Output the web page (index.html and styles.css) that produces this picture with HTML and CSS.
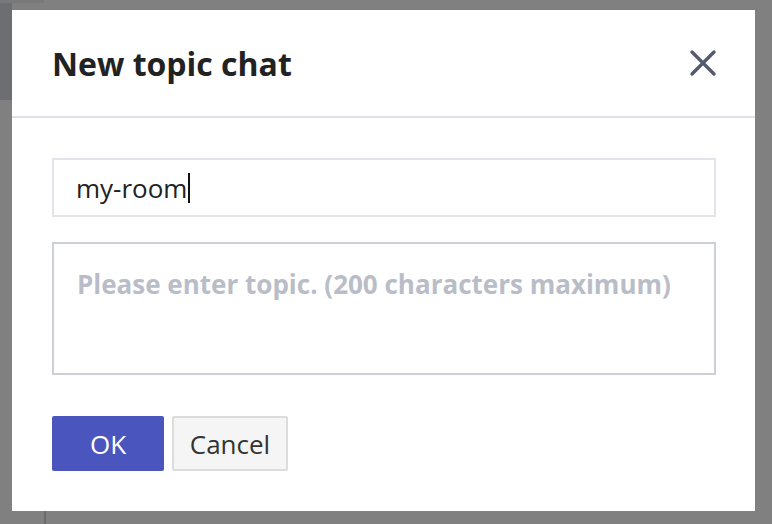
FILE: index.html
```html
<!DOCTYPE html>
<html lang="en">
<head>
<meta charset="utf-8">
<title>New topic chat</title>
<link rel="stylesheet" href="styles.css">
</head>
<body>
<div class="backdrop">
  <div class="bd-top"></div>
  <div class="bd-side"></div>
  <div class="bd-line"></div>
</div>
<div class="modal" role="dialog" aria-labelledby="dlg-title">
  <div class="modal-header">
    <h1 id="dlg-title" class="modal-title">New topic chat</h1>
    <button class="close-btn" aria-label="Close">
      <svg width="28" height="28" viewBox="0 0 28 28"><path d="M3 3 L25 25 M25 3 L3 25" stroke="#545b6b" stroke-width="3.4" stroke-linecap="round" fill="none"/></svg>
    </button>
  </div>
  <div class="modal-body">
    <div class="field field-name"><span class="field-value">my-room</span><span class="caret"></span></div>
    <div class="field field-topic"><span class="placeholder">Please enter topic. (200 characters maximum)</span></div>
    <div class="actions">
      <button class="btn btn-primary">OK</button>
      <button class="btn btn-default">Cancel</button>
    </div>
  </div>
</div>
</body>
</html>
```
FILE: styles.css
```css
html, body {
  margin: 0;
  padding: 0;
  width: 772px;
  height: 524px;
  overflow: hidden;
}
body {
  background: #808080;
  font-family: "Open Sans", "Noto Sans", sans-serif;
  position: relative;
}
.backdrop {
  position: absolute;
  inset: 0;
}
.bd-top {
  position: absolute;
  left: 0;
  top: 0;
  width: 44px;
  height: 3px;
  background: #78797b;
}
.bd-side {
  position: absolute;
  left: 0;
  top: 3px;
  width: 12px;
  height: 97px;
  background: #6d6e72;
}
.bd-line {
  position: absolute;
  left: 44px;
  top: 511px;
  width: 2px;
  height: 13px;
  background: #6b6b6b;
}
.modal {
  position: absolute;
  left: 12px;
  top: 10px;
  width: 743px;
  height: 501px;
  background: #fff;
  display: flex;
  flex-direction: column;
}
.modal-header {
  height: 106px;
  border-bottom: 2px solid #e0e0e8;
  display: flex;
  align-items: center;
  justify-content: space-between;
  padding: 0 38px 0 40px;
}
.modal-title {
  margin: 0;
  font-size: 32px;
  font-weight: 700;
  color: #222;
  letter-spacing: 0;
}
.close-btn {
  border: 0;
  background: none;
  padding: 0;
  width: 28px;
  height: 28px;
  display: flex;
}
.modal-body {
  padding: 40px 39px 40px 40px;
  display: flex;
  flex-direction: column;
}
.field {
  box-sizing: border-box;
  border: 2px solid #e2e4e9;
  display: flex;
  align-items: center;
}
.field-name {
  height: 59px;
  padding-left: 22px;
  font-size: 26px;
  color: #222;
}
.caret {
  width: 2px;
  height: 30px;
  background: #111;
  margin-left: 1px;
}
.field-topic {
  margin-top: 25px;
  height: 133px;
  border-color: #cdd0d6;
  align-items: flex-start;
  padding: 24px 23px 20px;
}
.placeholder {
  font-size: 26px;
  font-weight: 700;
  color: #b9bdc7;
  line-height: 1.3;
}
.actions {
  margin-top: 41px;
  display: flex;
  gap: 8px;
}
.btn {
  height: 55px;
  font-family: inherit;
  font-size: 26px;
  border-radius: 2px;
  padding: 0;
}
.btn-primary {
  width: 112px;
  background: #4a55bd;
  color: #fff;
  border: 0;
}
.btn-default {
  width: 116px;
  background: #f5f5f5;
  color: #333;
  border: 2px solid #dcdcdc;
}
```
